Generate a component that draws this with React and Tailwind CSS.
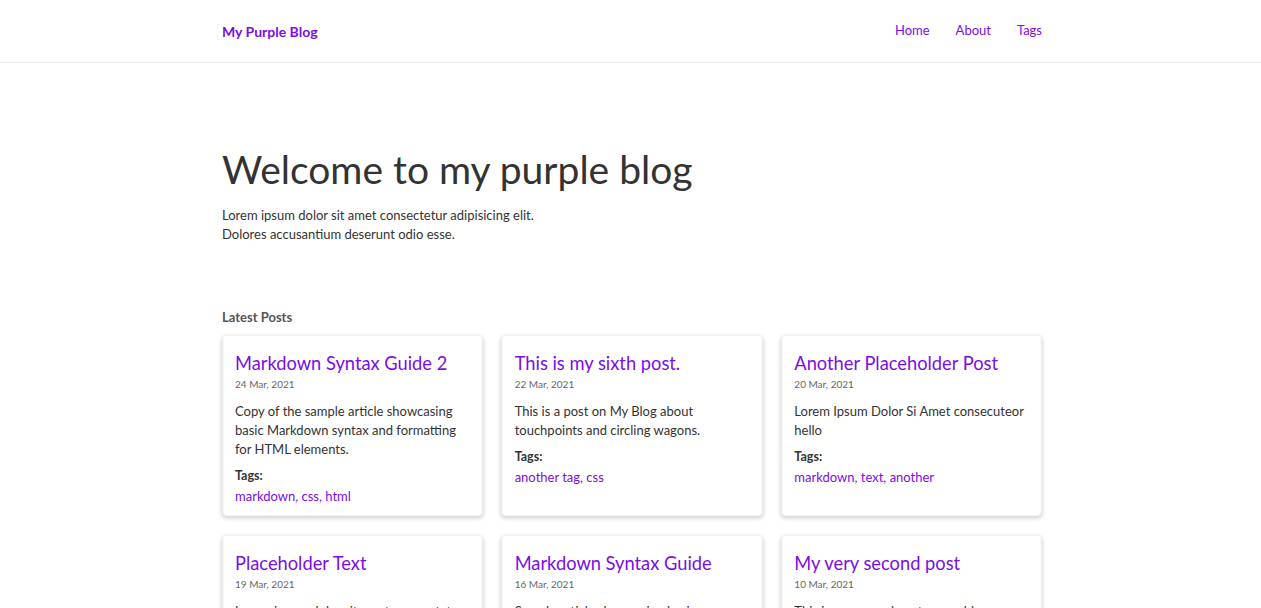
import React from 'react';

const posts = [
  {
    title: 'Markdown Syntax Guide 2',
    date: '24 Mar, 2021',
    summary: 'Copy of the sample article showcasing basic Markdown syntax and formatting for HTML elements.',
    tags: ['markdown', 'css', 'html'],
  },
  {
    title: 'This is my sixth post.',
    date: '22 Mar, 2021',
    summary: 'This is a post on My Blog about touchpoints and circling wagons.',
    tags: ['another tag', 'css'],
  },
  {
    title: 'Another Placeholder Post',
    date: '20 Mar, 2021',
    summary: 'Lorem Ipsum Dolor Si Amet consecuteor hello',
    tags: ['markdown', 'text', 'another'],
  },
  {
    title: 'Placeholder Text',
    date: '19 Mar, 2021',
    summary: 'Lorem ipsum dolor sit amet, consectetur adipiscing elit.',
    tags: ['text'],
  },
  {
    title: 'Markdown Syntax Guide',
    date: '16 Mar, 2021',
    summary: 'Sample article showcasing basic Markdown syntax and formatting for HTML elements.',
    tags: ['markdown', 'css', 'html'],
  },
  {
    title: 'My very second post',
    date: '10 Mar, 2021',
    summary: 'This is my second post on my blog.',
    tags: ['another tag'],
  },
];

function PostCard({ post }) {
  return (
    <div className="bg-white rounded border border-gray-100 shadow-[0_2px_5px_rgba(0,0,0,0.2)] px-[12px] pt-[13px] pb-[9px]">
      <a href="#" className="block text-[18.3px] leading-[28px] text-[#7c0ce8]">
        {post.title}
      </a>
      <p className="text-[10px] leading-[15px] text-[#666]">{post.date}</p>
      <p className="mt-[10px] text-[13px] leading-[19px] text-[#333]">{post.summary}</p>
      <p className="mt-[7px] text-[12.5px] leading-[20px] font-bold text-[#333]">Tags:</p>
      <p className="text-[13px] leading-[20px] text-[#7c0ce8]">
        {post.tags.map((tag, i) => (
          <span key={tag}>
            <a href="#">{tag}</a>
            {i < post.tags.length - 1 ? ', ' : ''}
          </span>
        ))}
      </p>
    </div>
  );
}

export default function App() {
  return (
    <div className="min-h-screen bg-white font-['Segoe_UI','Lato',sans-serif] text-[#333]">
      {/* Header */}
      <header className="h-[63px] border-b border-[#eee]">
        <div className="w-[820px] mx-auto translate-x-[1.5px] h-full flex items-center justify-between">
          <a href="#" className="text-[14px] font-bold text-[#7c0ce8]">My Purple Blog</a>
          <nav className="flex gap-[26px] text-[13px] text-[#7c0ce8]">
            <a href="#">Home</a>
            <a href="#">About</a>
            <a href="#">Tags</a>
          </nav>
        </div>
      </header>

      <main className="w-[820px] mx-auto translate-x-[1.5px]">
        {/* Hero */}
        <section className="pt-[81px]">
          <h1 className="text-[39px] leading-[50px] font-normal text-[#333]">Welcome to my purple blog</h1>
          <p className="mt-[12px] text-[13px] leading-[19px]">
            Lorem ipsum dolor sit amet consectetur adipisicing elit.
            <br />
            Dolores accusantium deserunt odio esse.
          </p>
        </section>

        {/* Latest posts */}
        <section className="mt-[64px]">
          <h2 className="text-[13px] leading-[18px] font-bold text-[#555]">Latest Posts</h2>
          <div className="mt-[9px] grid grid-cols-3 gap-[19px]">
            {posts.map((post) => (
              <PostCard key={post.title} post={post} />
            ))}
          </div>
        </section>
      </main>
    </div>
  );
}
